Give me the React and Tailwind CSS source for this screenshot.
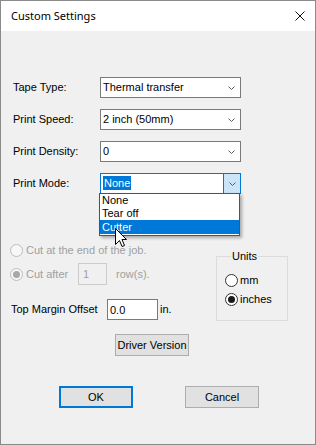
import React from 'react';

const Chevron = () => (
  <svg width="7" height="4" viewBox="0 0 7 4">
    <path d="M0.5 0.5 L3.5 3.5 L6.5 0.5" fill="none" stroke="#5a5a5a" strokeWidth="1" />
  </svg>
);

const Combo = ({ value, open }) => (
  <div
    className={`flex h-[21px] w-[141px] items-center border bg-white ${
      open ? 'border-[#0078d7]' : 'border-[#7a7a7a]'
    }`}
  >
    <div className="flex-1 pl-[2px]">
      {open ? <span className="bg-[#0078d7] px-[1px] py-[1px] text-white">{value}</span> : value}
    </div>
    <div
      className={`flex h-full w-[17px] items-center justify-center ${
        open ? 'border-l border-[#0078d7] bg-[#cce4f7]' : ''
      }`}
    >
      <Chevron />
    </div>
  </div>
);

const Radio = ({ checked, disabled }) => (
  <span
    className={`flex h-[13px] w-[13px] shrink-0 items-center justify-center rounded-full border ${
      disabled ? 'border-[#bcbcbc] bg-[#f7f7f7]' : 'border-[#333333] bg-white'
    }`}
  >
    {checked && (
      <span className={`h-[7px] w-[7px] rounded-full ${disabled ? 'bg-[#a8a8a8]' : 'bg-[#1a1a1a]'}`} />
    )}
  </span>
);

const Button = ({ children, primary }) => (
  <div
    className={`flex h-[22px] w-[74px] items-center justify-center bg-[#e1e1e1] ${
      primary ? 'border-2 border-[#0078d7]' : 'border border-[#adadad]'
    }`}
  >
    {children}
  </div>
);

const ComboRow = ({ label, value, open, children }) => (
  <div className="relative flex h-[21px] items-center">
    <span className="ml-[12px] w-[87px]">{label}</span>
    <Combo value={value} open={open} />
    {children}
  </div>
);

export default function App() {
  return (
    <div className="relative flex h-[445px] w-[316px] flex-col border border-[#8a8a8a] bg-[#f0f0f0] font-['Liberation_Sans',Arial,sans-serif] text-[11px] text-black">
      <div className="flex h-[30px] shrink-0 items-center justify-between bg-white pl-[10px] pr-[10px]">
        <span className="font-['Noto_Sans',sans-serif] text-[11px]">Custom Settings</span>
        <svg width="10" height="10" viewBox="0 0 10 10">
          <path d="M0.5 0.5 L9.5 9.5 M9.5 0.5 L0.5 9.5" stroke="#111" strokeWidth="1" />
        </svg>
      </div>

      <div className="flex flex-col gap-[11px] pt-[46px]">
        <ComboRow label="Tape Type:" value="Thermal transfer" />
        <ComboRow label="Print Speed:" value="2 inch (50mm)" />
        <ComboRow label="Print Density:" value="0" />
        <ComboRow label="Print Mode:" value="None" open>
          <div className="absolute left-[98px] top-[20px] z-10 w-[141px] border border-[#1b5fa8] bg-white pb-[1px] shadow-[2px_2px_3px_rgba(0,0,0,0.3)]">
            <div className="flex h-[13px] items-center pl-[2px]">None</div>
            <div className="flex h-[13px] items-center pl-[2px]">Tear off</div>
            <div className="flex h-[14px] items-center bg-[#0078d7] pl-[2px] text-white">Cutter</div>
          </div>
        </ComboRow>
      </div>

      <div className="mt-[50px] flex items-start">
        <div className="ml-[9px] flex w-[206px] flex-col">
          <div className="flex h-[13px] items-center text-[#a0a0a0]">
            <Radio disabled />
            <span className="ml-[3px]">Cut at the end of the job.</span>
          </div>
          <div className="mt-[6px] flex h-[22px] items-center text-[#a0a0a0]">
            <Radio disabled checked />
            <span className="ml-[3px] w-[52px]">Cut after</span>
            <div className="h-[22px] w-[29px] border border-[#cccccc] pl-[4px] pt-[2px]">1</div>
            <span className="ml-[9px]">row(s).</span>
          </div>
          <div className="mt-[14px] flex h-[21px] items-center">
            <span className="ml-[1px] w-[96px]">Top Margin Offset</span>
            <div className="flex h-[21px] w-[51px] items-center border border-[#7a7a7a] bg-white pl-[2px] pt-[2px]">0.0</div>
            <span className="ml-[2px]">in.</span>
          </div>
        </div>
        <fieldset className="mt-[6px] h-[71px] w-[72px] border border-[#dcdcdc] pl-[8px]">
          <legend className="ml-[6px] px-[1px] leading-[13px]">Units</legend>
          <div className="mt-[11px] flex h-[13px] items-center">
            <Radio />
            <span className="ml-[2px]">mm</span>
          </div>
          <div className="mt-[6px] flex h-[13px] items-center">
            <Radio checked />
            <span className="ml-[2px]">inches</span>
          </div>
        </fieldset>
      </div>

      <div className="ml-[114px] mt-[13px]">
        <Button>Driver Version</Button>
      </div>

      <div className="ml-[58px] mt-[30px] flex gap-[52px]">
        <Button primary>OK</Button>
        <Button>Cancel</Button>
      </div>

      <svg
        className="absolute left-[114px] top-[227px] z-20"
        width="13"
        height="20"
        viewBox="0 0 13 20"
      >
        <path
          d="M0.5 0.5 L0.5 16.5 L4.5 12.5 L7 18.5 L9.5 17.5 L7 11.5 L11.5 11.5 Z"
          fill="#fff"
          stroke="#000"
          strokeWidth="1"
          strokeLinejoin="miter"
        />
      </svg>
    </div>
  );
}
